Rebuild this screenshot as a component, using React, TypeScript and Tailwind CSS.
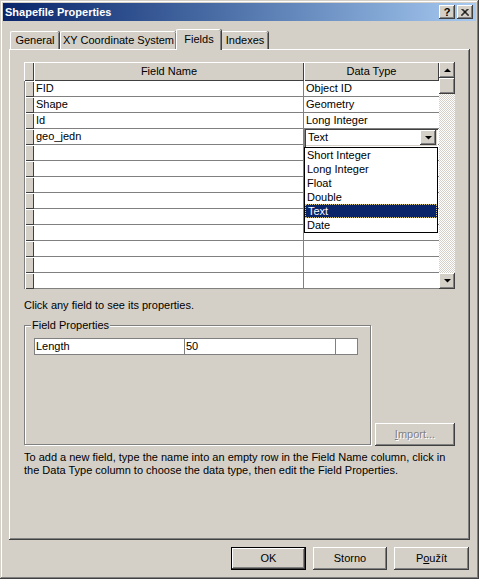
import React from "react";

const raised =
  "shadow-[inset_-1px_-1px_#404040,inset_1px_1px_#ffffff,inset_-2px_-2px_#808080,inset_2px_2px_#d4d0c8]";
const header = "shadow-[inset_1px_1px_#ffffff,inset_-1px_-1px_#404040]";

function Arrow({ down }: { down?: boolean }) {
  return (
    <svg width="7" height="4" viewBox="0 0 7 4">
      <polygon points={down ? "0,0 7,0 3.5,3.6" : "3.5,0.4 7,4 0,4"} fill="#000" />
    </svg>
  );
}

const rows = [
  { name: "FID", type: "Object ID" },
  { name: "Shape", type: "Geometry" },
  { name: "Id", type: "Long Integer" },
  { name: "geo_jedn", type: "", combo: true },
  ...Array.from({ length: 9 }, () => ({ name: "", type: "" })),
];

const options = ["Short Integer", "Long Integer", "Float", "Double", "Text", "Date"];

function Tab({ label, w, active }: { label: string; w: string; active?: boolean }) {
  return (
    <div
      className={`${w} flex items-center justify-center rounded-t-[2px] border-l border-t border-white shadow-[inset_-1px_0_#808080,1px_0_#404040] bg-[#d4d0c8] ${
        active ? "h-[21px] z-10 -mb-[1px] pb-[2px]" : "h-[18px]"
      }`}
    >
      {label}
    </div>
  );
}

export default function App() {
  return (
    <div className="w-[479px] h-[579px] bg-[#d4d0c8] p-[3px] text-[11px] leading-[13px] text-black font-['Liberation_Sans',Arial,sans-serif] shadow-[inset_-1px_-1px_#404040,inset_1px_1px_#d4d0c8,inset_-2px_-2px_#808080,inset_2px_2px_#ffffff]">
      {/* title bar */}
      <div className="h-[18px] flex items-center justify-between pl-[2px] pr-[3px] bg-linear-to-r from-[#0a246a] to-[#a6caf0]">
        <span className="text-white font-bold text-[11px]">Shapefile Properties</span>
        <div className="flex gap-[2px]">
          <div className={`w-[16px] h-[14px] bg-[#d4d0c8] ${raised} flex items-center justify-center font-bold text-[11px] leading-none pt-[1px]`}>
            ?
          </div>
          <div className={`w-[16px] h-[14px] bg-[#d4d0c8] ${raised} flex items-center justify-center`}>
            <svg width="8" height="7" viewBox="0 0 8 7">
              <path d="M0.5 0 L7.5 7 M1.5 0 L8 6.5 M7.5 0 L0.5 7 M6.5 0 L0 6.5" stroke="#000" strokeWidth="1" fill="none" />
            </svg>
          </div>
        </div>
      </div>

      {/* tabs */}
      <div className="mt-[8px] h-[20px] flex items-end pl-[7px] relative z-10">
        <Tab label="General" w="w-[49px]" />
        <div className="w-[1px]" />
        <Tab label="XY Coordinate System" w="w-[116px]" />
        <Tab label="Fields" w="w-[45px]" active />
        <Tab label="Indexes" w="w-[47px]" />
      </div>

      {/* panel */}
      <div className="ml-[6px] w-[461px] h-[491px] pt-[13px] pl-[15px] shadow-[inset_-1px_-1px_#404040,inset_1px_1px_#ffffff,inset_-2px_-2px_#808080]">
        {/* grid */}
        <div className="flex w-[431px] h-[227px]">
          <div className="w-[415px] flex flex-col">
            <div className="flex h-[19px]">
              <div className={`w-[10px] ${header} bg-[#d4d0c8]`} />
              <div className={`w-[270px] ${header} bg-[#d4d0c8] flex items-center justify-center`}>Field Name</div>
              <div className={`w-[135px] ${header} bg-[#d4d0c8] flex items-center justify-center`}>Data Type</div>
            </div>
            {rows.map((r, i) => (
              <div key={i} className="flex h-[16px]">
                <div className={`w-[10px] ${header} bg-[#d4d0c8] border-l border-[#808080]`} />
                <div className="w-[270px] bg-white border-b border-r border-[#808080] pl-[2px] flex items-center">
                  {r.name}
                </div>
                <div className="w-[135px] bg-white border-b border-[#808080] pl-[2px] flex items-center relative">
                  {r.type}
                  {r.combo && (
                    <>
                      <div className="absolute -top-[1px] left-0 w-[134px] h-[19px] bg-white z-20 shadow-[inset_1px_1px_#808080,inset_2px_2px_#404040,inset_-1px_-1px_#ffffff,inset_-2px_-2px_#d4d0c8] flex items-center pl-[4px]">
                        Text
                        <div className={`absolute right-[2px] top-[2px] w-[16px] h-[15px] bg-[#d4d0c8] ${raised} flex items-center justify-center`}>
                          <Arrow down />
                        </div>
                      </div>
                      <div className="absolute top-[18px] left-0 w-[134px] bg-white border border-black z-20 flex flex-col">
                        {options.map((o) => (
                          <div
                            key={o}
                            className={`h-[14px] pl-[2px] flex items-center ${
                              o === "Text" ? "bg-[#0a246a] text-white border border-dotted border-[#d8c878] pl-[1px]" : ""
                            }`}
                          >
                            {o}
                          </div>
                        ))}
                      </div>
                    </>
                  )}
                </div>
              </div>
            ))}
          </div>
          <div className="w-[16px] flex flex-col">
            <div className={`h-[16px] bg-[#d4d0c8] ${raised} flex items-center justify-center`}>
              <Arrow />
            </div>
            <div className={`h-[16px] bg-[#d4d0c8] ${raised}`} />
            <div className="flex-1 bg-[repeating-conic-gradient(#d4d0c8_0%_25%,#ffffff_0%_50%)] bg-[length:2px_2px]" />
            <div className={`h-[16px] bg-[#d4d0c8] ${raised} flex items-center justify-center`}>
              <Arrow down />
            </div>
          </div>
        </div>

        <div className="mt-[10px]">Click any field to see its properties.</div>

        {/* field properties + import */}
        <div className="mt-[13px] flex items-end gap-[4px]">
          <div className="relative w-[347px] h-[120px] border border-[#808080] shadow-[inset_1px_1px_#ffffff,1px_1px_#ffffff] pt-[12px] pl-[9px]">
            <span className="absolute -top-[7px] left-[6px] px-[1px] bg-[#d4d0c8]">Field Properties</span>
            <div className="flex w-[324px] h-[17px] border border-[#808080] bg-white">
              <div className="w-[150px] border-r border-[#808080] pl-[1px] flex items-center">Length</div>
              <div className="w-[151px] border-r border-[#808080] pl-[1px] flex items-center">50</div>
              <div className="flex-1" />
            </div>
          </div>
          <div className={`w-[80px] h-[23px] bg-[#d4d0c8] ${raised} flex items-center justify-center text-[#808080] [text-shadow:1px_1px_0_#ffffff] -mb-[1px]`}>
            <span>
              <span className="underline">I</span>mport...
            </span>
          </div>
        </div>

        <div className="mt-[6px] whitespace-nowrap">
          To add a new field, type the name into an empty row in the Field Name column, click in
          <br />
          the Data Type column to choose the data type, then edit the Field Properties.
        </div>
      </div>

      {/* bottom buttons */}
      <div className="mt-[7px] flex justify-end gap-[7px] pr-[7px]">
        <div className="w-[75px] h-[23px] border border-black">
          <div className={`w-full h-full bg-[#d4d0c8] ${raised} flex items-center justify-center`}>OK</div>
        </div>
        <div className={`w-[74px] h-[23px] bg-[#d4d0c8] ${raised} flex items-center justify-center`}>Storno</div>
        <div className={`w-[75px] h-[23px] bg-[#d4d0c8] ${raised} flex items-center justify-center`}>
          <span>
            P<span className="underline">o</span>užít
          </span>
        </div>
      </div>
    </div>
  );
}
